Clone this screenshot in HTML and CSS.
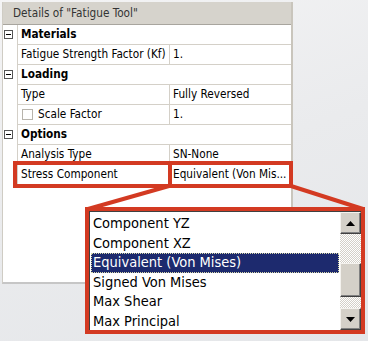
FILE: index.html
```html
<!DOCTYPE html>
<html>
<head>
<meta charset="utf-8">
<link rel="stylesheet" href="styles.css">
</head>
<body>
<div class="stage">
  <div class="panel">
    <div class="header">Details of "Fatigue Tool"</div>
    <div class="row cat"><div class="gut"><span class="minus"></span></div><div class="catlabel">Materials</div></div>
    <div class="row"><div class="gut"></div><div class="lab">Fatigue Strength Factor (Kf)</div><div class="val">1.</div></div>
    <div class="row cat"><div class="gut"><span class="minus"></span></div><div class="catlabel">Loading</div></div>
    <div class="row"><div class="gut"></div><div class="lab">Type</div><div class="val">Fully Reversed</div></div>
    <div class="row"><div class="gut"></div><div class="lab"><span class="check"></span>Scale Factor</div><div class="val">1.</div></div>
    <div class="row cat"><div class="gut"><span class="minus"></span></div><div class="catlabel">Options</div></div>
    <div class="row"><div class="gut"></div><div class="lab">Analysis Type</div><div class="val">SN-None</div></div>
    <div class="row"><div class="gut"></div><div class="lab">Stress Component</div><div class="val">Equivalent (Von Mis...</div></div>
  </div>

  <div class="hl-box"><div class="hl-left"></div><div class="hl-right"></div></div>

  <svg class="lines" width="368" height="341" viewBox="0 0 368 341">
    <line x1="169" y1="186" x2="88" y2="209" stroke="#d33a22" stroke-width="4"/>
    <line x1="291" y1="186" x2="363" y2="209" stroke="#d33a22" stroke-width="4"/>
  </svg>

  <div class="dropdown">
    <div class="inner">
      <div class="list">
        <div class="item">Component YZ</div>
        <div class="item">Component XZ</div>
        <div class="item sel">Equivalent (Von Mises)</div>
        <div class="item">Signed Von Mises</div>
        <div class="item">Max Shear</div>
        <div class="item">Max Principal</div>
      </div>
      <div class="sbar">
        <div class="sbtn"><svg width="9" height="5" viewBox="0 0 9 5"><polygon points="4.5,0 9,5 0,5" fill="#000"/></svg></div>
        <div class="track t1"></div>
        <div class="thumb"></div>
        <div class="track t2"></div>
        <div class="sbtn"><svg width="9" height="5" viewBox="0 0 9 5"><polygon points="0,0 9,0 4.5,5" fill="#000"/></svg></div>
      </div>
    </div>
  </div>
</div>
</body>
</html>
```

FILE: styles.css
```css
* { box-sizing: border-box; }
html, body { margin: 0; padding: 0; }
body {
  width: 368px;
  height: 341px;
  overflow: hidden;
  background: linear-gradient(160deg, #f4f4f5 0%, #eaebed 50%, #e4e6e9 100%);
  font-family: "DejaVu Sans Condensed", "DejaVu Sans", sans-serif;
  color: #000;
}
.stage {
  position: relative;
  width: 368px;
  height: 341px;
  padding: 2px 0 0 2px;
}
.panel {
  width: 291px;
  height: 282px;
  background: #fff;
  border-left: 1px solid #cfccc4;
  border-right: 2px solid #c9c5bc;
  border-bottom: 2px solid #c6c6c6;
  display: flex;
  flex-direction: column;
}
.header {
  height: 23px;
  background: #d6d3cc;
  border-bottom: 1px solid #a8a59e;
  font-size: 11.7px;
  color: #333;
  padding: 4px 0 0 10px;
  line-height: 14px;
}
.row {
  display: flex;
  height: 20px;
  font-size: 11.7px;
  line-height: 19px;
}
.gut {
  width: 15px;
  border-right: 1px solid #d4d0c8;
  position: relative;
}
.minus {
  position: absolute;
  left: 1px;
  top: 5px;
  width: 9px;
  height: 9px;
  border: 1px solid #555;
  background: #fff;
}
.minus::after {
  content: "";
  position: absolute;
  left: 1px;
  top: 3px;
  width: 5px;
  height: 1px;
  background: #000;
}
.catlabel {
  flex: 1;
  font-weight: bold;
  padding-left: 3px;
  border-bottom: 1px solid #d4d0c8;
}
.lab {
  width: 152px;
  padding-left: 3px;
  border-bottom: 1px solid #d4d0c8;
  border-right: 1px solid #d4d0c8;
  display: flex;
  align-items: center;
  white-space: nowrap;
}
.val {
  flex: 1;
  padding-left: 3px;
  border-bottom: 1px solid #d4d0c8;
  white-space: nowrap;
  overflow: hidden;
}
.check {
  display: inline-block;
  width: 11px;
  height: 11px;
  border: 1px solid #b8b4ac;
  background: #fff;
  margin: 0 5px 0 1px;
}
.hl-box {
  position: absolute;
  left: 13px;
  top: 161px;
  width: 280px;
  height: 27px;
  display: flex;
}
.hl-left {
  width: 159px;
  border: 4px solid #d33a22;
}
.hl-right {
  flex: 1;
  border: 4px solid #d33a22;
  border-left: none;
}
.lines {
  position: absolute;
  left: 0;
  top: 0;
}
.dropdown {
  position: absolute;
  left: 85px;
  top: 207px;
  width: 280px;
  height: 127px;
  border: 4px solid #d33a22;
  background: #fff;
}
.inner {
  display: flex;
  height: 100%;
  border-top: 1px solid #404040;
  border-left: 1px solid #404040;
}
.list {
  flex: 1;
  padding: 2px 1px 0 1px;
  overflow: hidden;
  font-size: 14.5px;
}
.item {
  height: 19.5px;
  line-height: 19.5px;
  padding-left: 2px;
  white-space: nowrap;
}
.item.sel {
  background: #1d2a6e;
  color: #fff;
  outline: 1px dotted #d8d8a8;
  outline-offset: -1px;
}
.sbar {
  width: 21px;
  display: flex;
  flex-direction: column;
  background-color: #f0eee8;
  background-image: repeating-conic-gradient(#d4d0c8 0 25%, #fff 0 50%);
  background-size: 2px 2px;
}
.sbtn, .thumb {
  background: #d4d0c8;
  border-top: 1px solid #f4f2ee;
  border-left: 1px solid #f4f2ee;
  border-right: 1px solid #404040;
  border-bottom: 1px solid #404040;
  box-shadow: inset -1px -1px 0 #808080;
}
.sbtn {
  height: 22px;
  display: flex;
  align-items: center;
  justify-content: center;
}
.t1 { height: 29px; }
.thumb { height: 34px; }
.t2 { flex: 1; }
```
